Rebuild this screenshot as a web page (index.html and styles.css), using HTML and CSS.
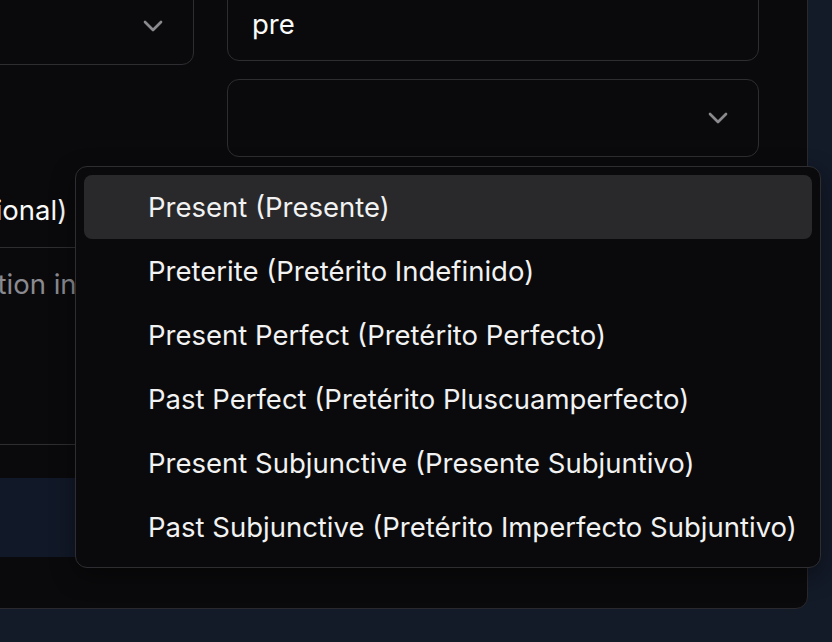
FILE: index.html
```html
<!DOCTYPE html>
<html lang="en">
<head>
<meta charset="utf-8">
<title>Conjugation</title>
<link rel="stylesheet" href="styles.css">
</head>
<body>
  <div class="card">
    <div class="grid">
      <div class="col col-left">
        <div class="select select-left">
          <span class="select-value"></span>
          <svg class="chev" viewBox="0 0 24 24" width="32" height="32"><polyline points="6 9 12 15 18 9"/></svg>
        </div>
      </div>
      <div class="col col-right">
        <div class="input">pre</div>
        <div class="select-wrap">
          <div class="select">
            <span class="select-value"></span>
            <svg class="chev" viewBox="0 0 24 24" width="32" height="32"><polyline points="6 9 12 15 18 9"/></svg>
          </div>
          <ul class="menu">
            <li class="item active">Present (Presente)</li>
            <li class="item">Preterite (Pretérito Indefinido)</li>
            <li class="item">Present Perfect (Pretérito Perfecto)</li>
            <li class="item">Past Perfect (Pretérito Pluscuamperfecto)</li>
            <li class="item">Present Subjunctive (Presente Subjuntivo)</li>
            <li class="item">Past Subjunctive (Pretérito Imperfecto Subjuntivo)</li>
          </ul>
        </div>
      </div>
    </div>
    <div class="field">
      <div class="label">Example Sentence (Optional)</div>
      <div class="textarea"><span class="placeholder">Describe the full situation in which the verb is used</span></div>
    </div>
    <div class="button">Generate</div>
  </div>
</body>
</html>
```

FILE: styles.css
```css
* { box-sizing: border-box; }
html, body {
  margin: 0;
  padding: 0;
}
body {
  background: #131a28;
  font-family: Inter, "Noto Sans", sans-serif;
  font-size: 27.5px;
  line-height: 36px;
  color: #fafafa;
  overflow: hidden;
  height: 642px;
}
.card {
  margin: -66px 24px 0 -359px;
  background: #0a0a0c;
  border: 1px solid #2a2a2e;
  border-radius: 12px;
  padding: 48px 48px 51px;
}
.grid {
  display: grid;
  grid-template-columns: 1fr 532px;
  column-gap: 33px;
}
.col-right {
  display: flex;
  flex-direction: column;
  gap: 18px;
}
.select, .input {
  height: 78px;
  border: 1px solid #2e2e32;
  border-radius: 12px;
  background: #0a0a0c;
  display: flex;
  align-items: center;
  padding: 0 24px;
}
.select { justify-content: space-between; }
.select-left { margin-top: 4px; }
.input { color: #fafafa; padding-top: 4px; }
.chev {
  fill: none;
  stroke: #8a8a8e;
  stroke-width: 2;
  stroke-linecap: round;
  stroke-linejoin: round;
  display: block;
}
.select-wrap { position: relative; }
.menu {
  position: absolute;
  top: calc(100% + 9px);
  right: -62px;
  width: 746px;
  margin: 0;
  padding: 8px;
  list-style: none;
  background: #0a0a0c;
  border: 1px solid #2e2e32;
  border-radius: 12px;
  box-shadow: 0 8px 24px rgba(0,0,0,0.4);
  z-index: 10;
}
.item {
  height: 64px;
  display: flex;
  align-items: center;
  padding-left: 64px;
  border-radius: 8px;
  color: #f2f2f2;
  white-space: nowrap;
}
.item.active { background: #29292c; }
.field {
  margin-top: 35px;
}
.label {
  color: #fafafa;
  margin-bottom: 19px;
  white-space: nowrap;
}
.textarea {
  height: 198px;
  border: 1px solid #2e2e32;
  border-radius: 12px;
  padding: 18px 24px;
  white-space: nowrap;
  overflow: hidden;
}
.placeholder { color: #8a8a90; }
.button {
  margin-top: 33px;
  height: 79px;
  background: #111827;
  border-radius: 10px;
  display: flex;
  align-items: center;
  justify-content: center;
  color: #fafafa;
}
```
